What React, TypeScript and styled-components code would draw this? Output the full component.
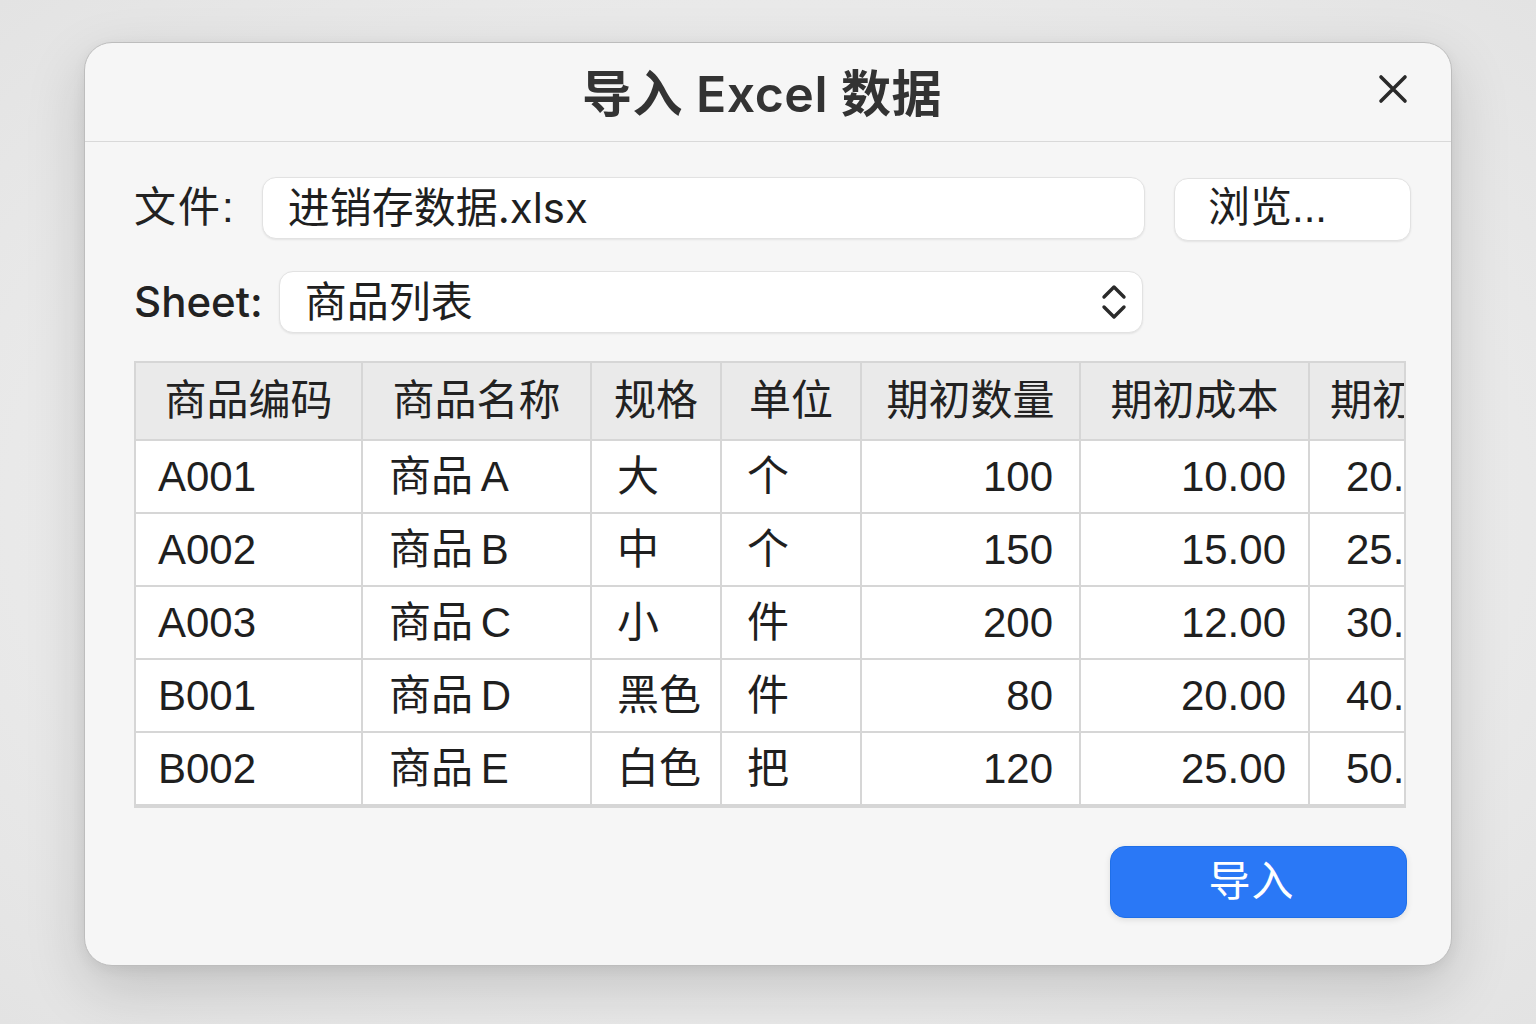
import React from "react";
import styled, { createGlobalStyle } from "styled-components";

const Global = createGlobalStyle`
  html, body { margin: 0; padding: 0; }
  body {
    background: radial-gradient(ellipse at center, #f1f1f1 0%, #e9e9e9 70%, #e3e3e3 100%);
    min-height: 1024px;
    font-family: "Liberation Sans", "Noto Sans CJK SC", sans-serif;
    color: #1f1f1f;
  }
  * { box-sizing: border-box; }
`;

const Page = styled.div`
  display: flex;
  justify-content: center;
  padding-top: 42px;
  height: 1024px;
`;

const Dialog = styled.div`
  width: 1368px;
  height: 924px;
  background: #f6f6f6;
  border: 1px solid #bdbdbd;
  border-radius: 28px;
  box-shadow: 0 22px 60px rgba(0, 0, 0, 0.16), 0 4px 14px rgba(0, 0, 0, 0.06);
  display: flex;
  flex-direction: column;
  overflow: hidden;
`;

const Header = styled.div`
  height: 99px;
  flex: none;
  border-bottom: 1px solid #d9d9d9;
  display: grid;
  grid-template-columns: 1fr auto 1fr;
  align-items: center;
  padding: 0 40px 0 48px;
`;

const Title = styled.h1`
  grid-column: 2;
  margin: 0 20px 0 0;
  font-family: "Inter", "Noto Sans CJK SC", sans-serif;
  font-size: 50px;
  font-weight: 600;
  color: #333;
  line-height: 1;
  padding-top: 4px;
  letter-spacing: 0.5px;
`;

const CloseButton = styled.button`
  grid-column: 3;
  justify-self: end;
  width: 36px;
  height: 36px;
  border: none;
  background: transparent;
  padding: 0;
  display: flex;
  align-items: center;
  justify-content: center;
  margin-top: -6px;
`;

const Body = styled.div`
  flex: 1;
  display: flex;
  flex-direction: column;
  padding: 34px 40px 47px 49px;
`;

const FieldRow = styled.div<{ $labelGap: number }>`
  display: flex;
  align-items: center;
  gap: ${(p) => p.$labelGap}px;
  height: 64px;
`;

const Label = styled.span<{ $latin?: boolean }>`
  font-family: ${(p) => (p.$latin ? `"Inter", ` : "")}"Liberation Sans", "Noto Sans CJK SC", sans-serif;
  font-size: 42px;
  font-weight: ${(p) => (p.$latin ? 500 : 400)};
  letter-spacing: ${(p) => (p.$latin ? 0 : 2)}px;
  color: #222;
  line-height: 1;
  flex: none;
`;

const Field = styled.div`
  flex: 1;
  height: 62px;
  background: #fff;
  border: 1px solid #e2e2e2;
  border-radius: 14px;
  box-shadow: 0 1px 2px rgba(0, 0, 0, 0.08);
  display: flex;
  align-items: center;
  justify-content: space-between;
  padding: 0 14px 0 25px;
  font-family: "Inter", "Noto Sans CJK SC", sans-serif;
  font-size: 42px;
  color: #1f1f1f;
  line-height: 1;
`;

const Side = styled.div<{ $width: number }>`
  width: ${(p) => p.$width}px;
  flex: none;
`;

const BrowseButton = styled.button`
  width: 237px;
  height: 63px;
  flex: none;
  margin-left: 3px;
  margin-top: 3px;
  background: #fff;
  border: 1px solid #e2e2e2;
  border-radius: 14px;
  box-shadow: 0 1px 2px rgba(0, 0, 0, 0.08);
  font-family: inherit;
  font-size: 42px;
  color: #1f1f1f;
  text-align: left;
  padding: 0 0 4px 33px;
  line-height: 1;
`;

const SheetRow = styled(FieldRow)`
  margin-top: 30px;
`;

const TableWrap = styled.div`
  margin-top: 27px;
  width: 1272px;
  border: 2px solid #d6d6d6;
  overflow: hidden;
`;

const Table = styled.table`
  border-collapse: collapse;
  table-layout: fixed;
  width: 1400px;
  font-size: 42px;
  line-height: 1;
`;

const Th = styled.th<{ $lead?: number }>`
  height: 77px;
  background: #eaeaea;
  font-weight: 400;
  color: #222;
  text-align: ${(p) => (p.$lead ? "left" : "center")};
  padding: 0 0 0 ${(p) => p.$lead ?? 0}px;
  white-space: nowrap;
  overflow: hidden;
  border-right: 2px solid #d6d6d6;
  border-bottom: 2px solid #d6d6d6;
`;

const Td = styled.td<{ $align: "left" | "right"; $pad: number }>`
  height: 73px;
  background: #fff;
  color: #1f1f1f;
  text-align: ${(p) => p.$align};
  padding: 0 ${(p) => (p.$align === "right" ? p.$pad : 0)}px 0
    ${(p) => (p.$align === "left" ? p.$pad : 0)}px;
  white-space: nowrap;
  word-spacing: -4px;
  overflow: hidden;
  border-right: 2px solid #d6d6d6;
  border-bottom: 2px solid #d6d6d6;
`;

const Footer = styled.div`
  margin-top: auto;
  display: flex;
  justify-content: flex-end;
  padding-right: 4px;
`;

const PrimaryButton = styled.button`
  width: 297px;
  height: 72px;
  background: #2a78f6;
  border: 1px solid #1f6fe8;
  border-radius: 15px;
  box-shadow: 0 2px 6px rgba(0, 0, 0, 0.1);
  color: #fff;
  font-family: inherit;
  font-size: 42px;
  line-height: 1;
  letter-spacing: 1px;
  padding: 0 14px 0 0;
`;

const widths = [226, 229, 130, 140, 219, 229, 229];
const headers = ["商品编码", "商品名称", "规格", "单位", "期初数量", "期初成本", "期初金额"];
const rows = [
  ["A001", "商品 A", "大", "个", "100", "10.00", "20.00"],
  ["A002", "商品 B", "中", "个", "150", "15.00", "25.00"],
  ["A003", "商品 C", "小", "件", "200", "12.00", "30.00"],
  ["B001", "商品 D", "黑色", "件", "80", "20.00", "40.00"],
  ["B002", "商品 E", "白色", "把", "120", "25.00", "50.00"],
];
const cellStyle: { align: "left" | "right"; pad: number }[] = [
  { align: "left", pad: 22 },
  { align: "left", pad: 26 },
  { align: "left", pad: 25 },
  { align: "left", pad: 25 },
  { align: "right", pad: 26 },
  { align: "right", pad: 22 },
  { align: "left", pad: 36 },
];

export default function App() {
  return (
    <>
      <Global />
      <Page>
        <Dialog>
          <Header>
            <Title>导入 Excel 数据</Title>
            <CloseButton aria-label="关闭">
              <svg width="32" height="32" viewBox="0 0 32 32">
                <path d="M4 4 L28 28 M28 4 L4 28" stroke="#2a2a2a" strokeWidth="3.6" strokeLinecap="round" />
              </svg>
            </CloseButton>
          </Header>
          <Body>
            <FieldRow $labelGap={26}>
              <Label>文件:</Label>
              <Field>进销存数据.xlsx</Field>
              <BrowseButton>浏览...</BrowseButton>
            </FieldRow>
            <SheetRow $labelGap={16}>
              <Label $latin>Sheet:</Label>
              <Field>
                <span>商品列表</span>
                <svg width="28" height="38" viewBox="0 0 28 38">
                  <path d="M4 14 L14 4 L24 14 M4 24 L14 34 L24 24" fill="none" stroke="#2a2a2a" strokeWidth="3.4" strokeLinecap="round" strokeLinejoin="round" />
                </svg>
              </Field>
              <Side $width={252} />
            </SheetRow>
            <TableWrap>
              <Table>
                <colgroup>
                  {widths.map((w, i) => (
                    <col key={i} style={{ width: w }} />
                  ))}
                </colgroup>
                <thead>
                  <tr>
                    {headers.map((h, i) => (
                      <Th key={h} $lead={i === headers.length - 1 ? 20 : undefined}>
                        {h}
                      </Th>
                    ))}
                  </tr>
                </thead>
                <tbody>
                  {rows.map((r) => (
                    <tr key={r[0]}>
                      {r.map((c, i) => (
                        <Td key={i} $align={cellStyle[i].align} $pad={cellStyle[i].pad}>
                          {c}
                        </Td>
                      ))}
                    </tr>
                  ))}
                </tbody>
              </Table>
            </TableWrap>
            <Footer>
              <PrimaryButton>导入</PrimaryButton>
            </Footer>
          </Body>
        </Dialog>
      </Page>
    </>
  );
}
